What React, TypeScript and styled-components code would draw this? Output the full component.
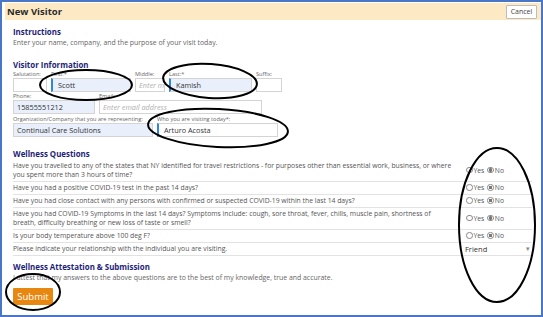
import React from 'react';
import styled, { createGlobalStyle } from 'styled-components';

const GlobalStyle = createGlobalStyle`
  html, body { margin: 0; padding: 0; background: #ffffff; }
  body { font-family: "Open Sans", "Noto Sans", sans-serif; }
  * { box-sizing: border-box; }
`;

// each question is given as its display lines, to keep the wrap of the original
const questions: string[][] = [
  [
    'Have you travelled to any of the states that NY identified for travel restrictions - for purposes other than essential work, business, or where',
    'you spent more than 3 hours of time?',
  ],
  ['Have you had a positive COVID-19 test in the past 14 days?'],
  ['Have you had close contact with any persons with confirmed or suspected COVID-19 within the last 14 days?'],
  [
    'Have you had COVID-19 Symptoms in the last 14 days? Symptoms include: cough, sore throat, fever, chills, muscle pain, shortness of',
    'breath, difficulty breathing or new loss of taste or smell?',
  ],
  ['Is your body temperature above 100 deg F?'],
];

const App: React.FC = () => {
  return (
    <>
      <GlobalStyle />
      <Frame>
        <Header>
          <Title>New Visitor</Title>
          <CancelButton>Cancel</CancelButton>
        </Header>

        <Body>
          <Section $gap={11.5}>
            <Heading>Instructions</Heading>
            <Note>Enter your name, company, and the purpose of your visit today.</Note>
          </Section>

          <Section $gap={12}>
            <Heading>Visitor Information</Heading>
            <FieldRow>
              <Field $w={34}>
                <Label>Salutation:</Label>
                <Input />
              </Field>
              <Field $w={80}>
                <Label>First:*</Label>
                <Input $filled $required>Scott</Input>
              </Field>
              <Field $w={30}>
                <Label>Middle:</Label>
                <Input $placeholder>Enter m</Input>
              </Field>
              <Field $w={83}>
                <Label>Last:*</Label>
                <Input $filled $required>Kamish</Input>
              </Field>
              <Field $w={26}>
                <Label>Suffix:</Label>
                <Input />
              </Field>
            </FieldRow>
            <FieldRow>
              <Field $w={82}>
                <Label>Phone:</Label>
                <Input $filled>15855551212</Input>
              </Field>
              <Field $w={163}>
                <Label>Email:</Label>
                <Input $placeholder>Enter email address</Input>
              </Field>
            </FieldRow>
            <FieldRow>
              <Field $w={140}>
                <Label>Organization/Company that you are representing:</Label>
                <Input $filled>Continual Care Solutions</Input>
              </Field>
              <Field $w={121}>
                <Label>Who you are visiting today*:</Label>
                <Input $required>Arturo Acosta</Input>
              </Field>
            </FieldRow>
          </Section>

          <Section $gap={6}>
            <Heading>Wellness Questions</Heading>
            <QuestionList>
              {questions.map((lines) => (
                <QuestionRow key={lines[0]}>
                  <QuestionText>
                    {lines.map((l) => (
                      <Line key={l}>{l}</Line>
                    ))}
                  </QuestionText>
                  <Answer>
                    <Radio />
                    <RadioLabel>Yes</RadioLabel>
                    <Radio $checked />
                    <RadioLabel>No</RadioLabel>
                  </Answer>
                </QuestionRow>
              ))}
              <QuestionRow>
                <QuestionText>
                  <Line>Please indicate your relationship with the individual you are visiting.</Line>
                </QuestionText>
                <Select>
                  <span>Friend</span>
                  <Caret>▾</Caret>
                </Select>
              </QuestionRow>
            </QuestionList>
          </Section>

          <Section $gap={0}>
            <Heading>Wellness Attestation &amp; Submission</Heading>
            <Note>I attest that my answers to the above questions are to the best of my knowledge, true and accurate.</Note>
            <SubmitButton>Submit</SubmitButton>
          </Section>
        </Body>

        <Marks viewBox="0 0 543 317" width={543} height={317}>
          <ellipse cx={86} cy={85} rx={46} ry={15} />
          <ellipse cx={210} cy={81} rx={47} ry={17} transform="rotate(4 210 81)" />
          <ellipse cx={218} cy={128} rx={70} ry={19} transform="rotate(3 218 128)" />
          <ellipse cx={497} cy={225} rx={38} ry={77} />
          <ellipse cx={33} cy={292} rx={27} ry={18} />
        </Marks>
      </Frame>
    </>
  );
};

const Frame = styled.div`
  position: relative;
  width: 543px;
  height: 317px;
  border: 2px solid #4a76c8;
  padding: 1px 0 0 3px;
  overflow: hidden;
  background: #ffffff;
`;

const Header = styled.div`
  display: flex;
  align-items: center;
  justify-content: space-between;
  height: 17px;
  padding: 0 4px 0 2px;
  background: #fdeac5;
`;

const Title = styled.div`
  font-size: 9.5px;
  font-weight: 700;
  color: #2a2a2a;
`;

const CancelButton = styled.button`
  height: 14px;
  width: 31px;
  padding: 0;
  font-family: inherit;
  font-size: 7px;
  color: #444;
  background: #ffffff;
  border: 1px solid #bdbdbd;
  border-radius: 1px;
`;

const Body = styled.div`
  padding: 7px 8px 0 8px;
`;

const Section = styled.div<{ $gap: number }>`
  margin-bottom: ${({ $gap }) => $gap}px;
`;

const Heading = styled.div`
  font-size: 7.9px;
  font-weight: 700;
  color: #1e1e78;
  line-height: 11px;
`;

const Note = styled.div`
  font-size: 6.9px;
  color: #666;
  line-height: 10px;
`;

const FieldRow = styled.div`
  display: flex;
  gap: 4px;
  margin-bottom: 1.5px;
`;

const Field = styled.div<{ $w: number }>`
  width: ${({ $w }) => $w}px;
  display: flex;
  flex-direction: column;
`;

const Label = styled.div`
  font-size: 5.6px;
  color: #666;
  line-height: 7px;
  white-space: nowrap;
`;

const Input = styled.div<{ $filled?: boolean; $required?: boolean; $placeholder?: boolean }>`
  height: 14px;
  display: flex;
  align-items: center;
  padding-left: ${({ $required }) => ($required ? '5px' : '3px')};
  border: 1px solid #d4d4d4;
  border-left: ${({ $required }) => ($required ? '2px solid #2f86e0' : '1px solid #d4d4d4')};
  background: ${({ $filled }) => ($filled ? '#e9f0fb' : '#ffffff')};
  font-size: 7.3px;
  color: ${({ $placeholder }) => ($placeholder ? '#b0b0b0' : '#333')};
  font-style: ${({ $placeholder }) => ($placeholder ? 'italic' : 'normal')};
  white-space: nowrap;
  overflow: hidden;
`;

const QuestionList = styled.div`
  display: flex;
  flex-direction: column;
  width: 519px;
`;

const QuestionRow = styled.div`
  display: flex;
  align-items: center;
  justify-content: space-between;
  border-bottom: 1px solid #e2e2e2;
  padding: 1.5px 0;
`;

const QuestionText = styled.div`
  flex: 1;
  font-size: 6.8px;
  color: #555;
  line-height: 9px;
`;

const Line = styled.div`
  white-space: nowrap;
`;

const Answer = styled.div`
  width: 66px;
  display: flex;
  align-items: center;
`;

const Radio = styled.span<{ $checked?: boolean }>`
  width: 6.5px;
  height: 6.5px;
  border-radius: 50%;
  border: 1px solid #8a8a8a;
  background: ${({ $checked }) => ($checked ? 'radial-gradient(circle, #777 0 1.7px, #ffffff 2px)' : '#ffffff')};
  margin-right: 1px;
`;

const RadioLabel = styled.span`
  font-size: 6.8px;
  color: #555;
  margin-right: 3px;
`;

const Select = styled.div`
  width: 68px;
  height: 9px;
  display: flex;
  align-items: center;
  justify-content: space-between;
  padding: 0 2px 0 1px;
  font-size: 7.5px;
  color: #333;
`;

const Caret = styled.span`
  font-size: 7px;
  color: #888;
`;

const SubmitButton = styled.button`
  margin-top: 2px;
  width: 40px;
  height: 17px;
  padding: 0;
  border: none;
  border-radius: 1px;
  background: #e8870f;
  color: #ffffff;
  font-family: inherit;
  font-size: 9.5px;
`;

const Marks = styled.svg`
  position: absolute;
  left: -2px;
  top: -2px;
  pointer-events: none;
  fill: none;
  stroke: #000000;
  stroke-width: 2;
`;

export default App;
